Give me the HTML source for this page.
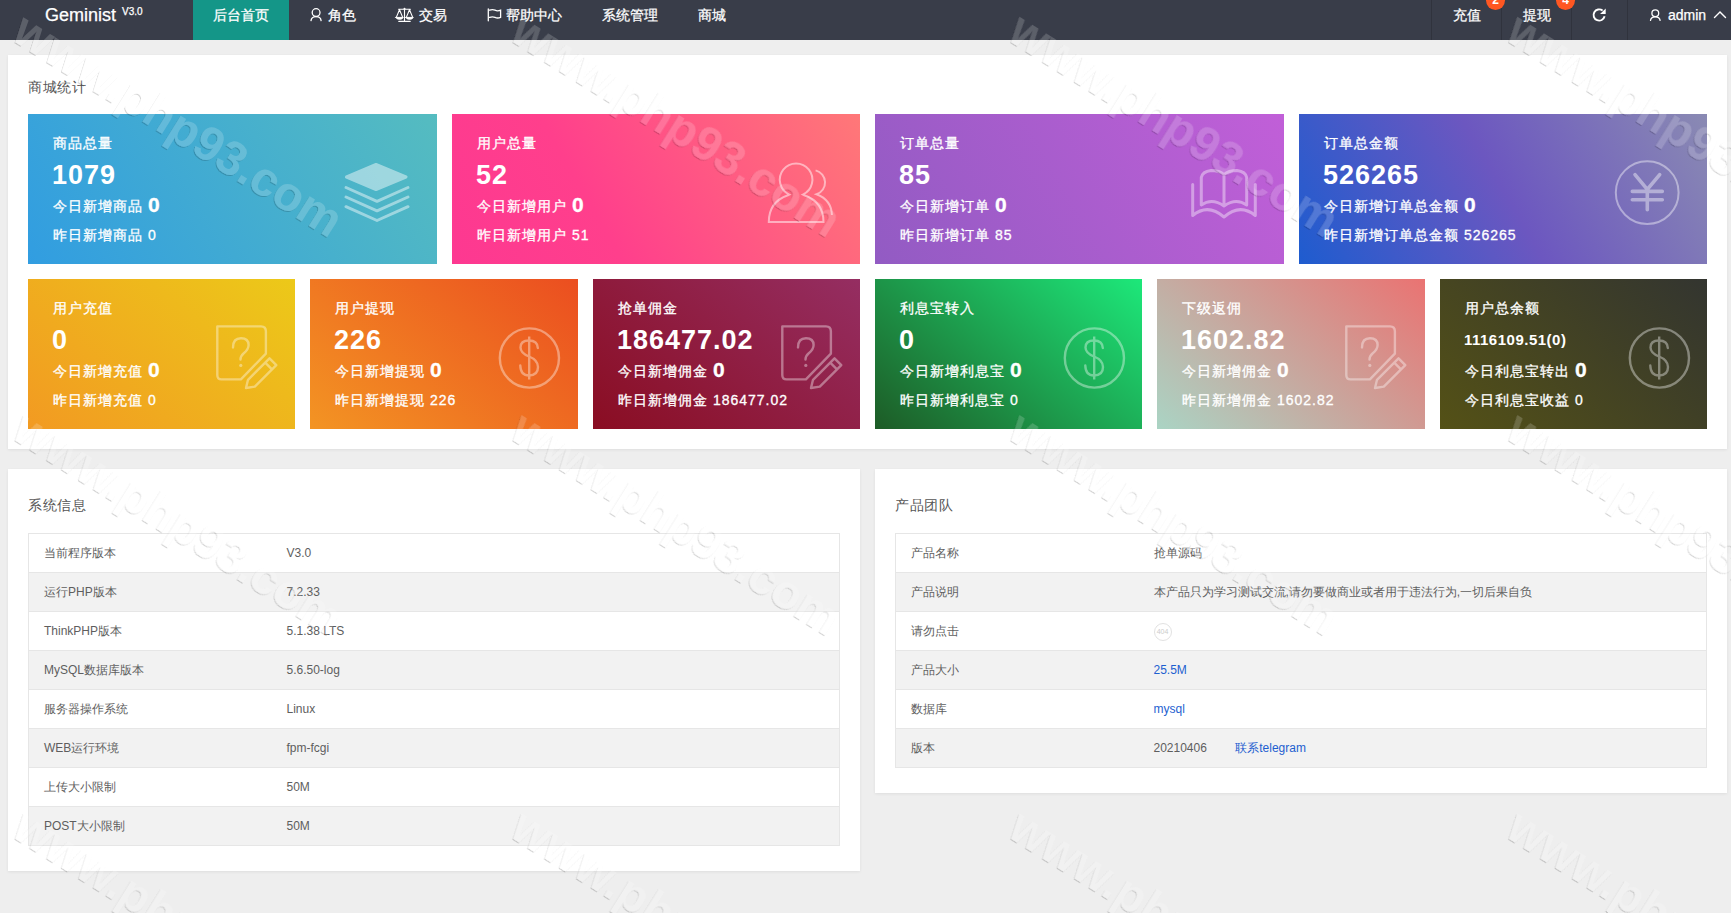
<!DOCTYPE html>
<html><head><meta charset="utf-8">
<style>
*{margin:0;padding:0;box-sizing:border-box}
html,body{width:1731px;height:913px;overflow:hidden}
body{background:#eeeeee;font-family:"Liberation Sans",sans-serif;position:relative;color:#666}
.abs{position:absolute}
#hd{left:0;top:0;width:1731px;height:40px;background:#393d49;color:#fff}
.nav{position:absolute;top:0;height:30px;line-height:30px;font-size:14px;color:#fff;white-space:nowrap;-webkit-text-stroke:.25px #fff}
.sep{position:absolute;top:0;width:1px;height:40px;background:#30333d}
.badge{position:absolute;top:-9px;width:19px;height:19px;border-radius:50%;background:#ff5722;color:#fff;font-size:12px;font-weight:bold;line-height:19px;text-align:center}
.panel{position:absolute;background:#fff;box-shadow:0 1px 3px rgba(0,0,0,.07)}
.ptitle{position:absolute;font-size:14px;color:#555;line-height:20px;letter-spacing:.5px}
.card{position:absolute;height:150px;color:#fff;overflow:hidden;letter-spacing:1px}
.card .t,.card .d1,.card .d2{-webkit-text-stroke:.3px #fff}
.card .t{position:absolute;left:25px;top:19px;font-size:14px;line-height:20px;letter-spacing:1px}
.card .n{position:absolute;left:24px;top:45px;font-size:27px;line-height:32px;font-weight:bold}
.card .d1{position:absolute;left:25px;top:79px;font-size:14px;line-height:22px;letter-spacing:1px}
.card .d1 b{font-size:21px;letter-spacing:0;position:relative;top:1px}
.card .d2{position:absolute;left:25px;top:111px;font-size:14px;line-height:20px;letter-spacing:1px}
.card svg{position:absolute}
table{position:absolute;border-collapse:collapse;font-size:12px;color:#5e5e5e}
td{height:39px;border:1px solid #e6e6e6;border-left:none;border-right:none;padding:0 0 0 15px;vertical-align:middle}
tr:nth-child(even) td{background:#f2f2f2}
.lnk{color:#1e5fd0}
</style></head><body>

<div id="hd" class="abs">
  <div class="nav" style="left:45px;font-size:18px;top:0px;line-height:30px">Geminist</div>
  <div class="nav" style="left:122px;font-size:10px;top:-3px;line-height:30px">V3.0</div>
  <div class="abs" style="left:193px;top:0;width:96px;height:40px;background:#149688"></div>
  <div class="nav" style="left:213px">后台首页</div>
  <div class="nav" style="left:328px">角色</div>
  <div class="nav" style="left:419px">交易</div>
  <div class="nav" style="left:506px">帮助中心</div>
  <div class="nav" style="left:602px">系统管理</div>
  <div class="nav" style="left:698px">商城</div>

  <div class="sep" style="left:1431px"></div>
  <div class="sep" style="left:1501px"></div>
  <div class="sep" style="left:1571px"></div>
  <div class="sep" style="left:1627px"></div>
  <div class="nav" style="left:1453px">充值</div>
  <div class="badge" style="left:1486px">2</div>
  <div class="nav" style="left:1523px">提现</div>
  <div class="badge" style="left:1556px">4</div>
  <div class="nav" style="left:1668px">admin</div>
</div>

<!-- top panel -->
<div class="panel" style="left:8px;top:55px;width:1719px;height:394px"></div>
<div class="ptitle" style="left:28px;top:77px">商城统计</div>

<div class="card" style="left:28px;top:114px;width:409px;background:linear-gradient(57deg,#319de1,#55bcc0)">
  <div class="t">商品总量</div><div class="n">1079</div>
  <div class="d1">今日新增商品 <b>0</b></div><div class="d2">昨日新增商品 0</div>
</div>
<div class="card" style="left:452px;top:114px;width:408px;background:linear-gradient(60deg,#fd3891,#ff3f8c 35%,#ff7878)">
  <div class="t">用户总量</div><div class="n">52</div>
  <div class="d1">今日新增用户 <b>0</b></div><div class="d2">昨日新增用户 51</div>
</div>
<div class="card" style="left:875px;top:114px;width:409px;background:linear-gradient(60deg,#925bc3,#c15fd8)">
  <div class="t">订单总量</div><div class="n">85</div>
  <div class="d1">今日新增订单 <b>0</b></div><div class="d2">昨日新增订单 85</div>
</div>
<div class="card" style="left:1299px;top:114px;width:408px;background:linear-gradient(60deg,#1e5ccf,#6c57c0 50%,#8a8ab3)">
  <div class="t">订单总金额</div><div class="n">526265</div>
  <div class="d1">今日新增订单总金额 <b>0</b></div><div class="d2">昨日新增订单总金额 526265</div>
</div>

<div class="card" style="left:28px;top:279px;width:267px;background:linear-gradient(40deg,#f29a22,#ecc919)">
  <div class="t">用户充值</div><div class="n">0</div>
  <div class="d1">今日新增充值 <b>0</b></div><div class="d2">昨日新增充值 0</div>
</div>
<div class="card" style="left:310px;top:279px;width:268px;background:linear-gradient(40deg,#f39423,#eb4e20)">
  <div class="t">用户提现</div><div class="n">226</div>
  <div class="d1">今日新增提现 <b>0</b></div><div class="d2">昨日新增提现 226</div>
</div>
<div class="card" style="left:593px;top:279px;width:267px;background:linear-gradient(40deg,#8a0d22,#952e62)">
  <div class="t">抢单佣金</div><div class="n">186477.02</div>
  <div class="d1">今日新增佣金 <b>0</b></div><div class="d2">昨日新增佣金 186477.02</div>
</div>
<div class="card" style="left:875px;top:279px;width:267px;background:linear-gradient(40deg,#1d5b26,#1de87a)">
  <div class="t">利息宝转入</div><div class="n">0</div>
  <div class="d1">今日新增利息宝 <b>0</b></div><div class="d2">昨日新增利息宝 0</div>
</div>
<div class="card" style="left:1157px;top:279px;width:268px;background:linear-gradient(40deg,#aad4c4,#ea7372)">
  <div class="t">下级返佣</div><div class="n">1602.82</div>
  <div class="d1">今日新增佣金 <b>0</b></div><div class="d2">昨日新增佣金 1602.82</div>
</div>
<div class="card" style="left:1440px;top:279px;width:267px;background:linear-gradient(40deg,#545116,#333530)">
  <div class="t">用户总余额</div><div class="n" style="font-size:15px;letter-spacing:.5px">1116109.51(0)</div>
  <div class="d1">今日利息宝转出 <b>0</b></div><div class="d2">今日利息宝收益 0</div>
</div>

<!-- bottom left panel -->
<div class="panel" style="left:8px;top:469px;width:852px;height:402px"></div>
<div class="ptitle" style="left:28px;top:495px">系统信息</div>
<table style="left:28px;top:533px;width:812px;border-left:1px solid #e6e6e6;border-right:1px solid #e6e6e6">
<colgroup><col style="width:243px"><col></colgroup>
<tr><td>当前程序版本</td><td>V3.0</td></tr>
<tr><td>运行PHP版本</td><td>7.2.33</td></tr>
<tr><td>ThinkPHP版本</td><td>5.1.38 LTS</td></tr>
<tr><td>MySQL数据库版本</td><td>5.6.50-log</td></tr>
<tr><td>服务器操作系统</td><td>Linux</td></tr>
<tr><td>WEB运行环境</td><td>fpm-fcgi</td></tr>
<tr><td>上传大小限制</td><td>50M</td></tr>
<tr><td>POST大小限制</td><td>50M</td></tr>
</table>

<!-- bottom right panel -->
<div class="panel" style="left:875px;top:469px;width:852px;height:324px"></div>
<div class="ptitle" style="left:895px;top:495px">产品团队</div>
<table style="left:895px;top:533px;width:812px;border-left:1px solid #e6e6e6;border-right:1px solid #e6e6e6">
<colgroup><col style="width:243px"><col></colgroup>
<tr><td>产品名称</td><td>抢单源码</td></tr>
<tr><td>产品说明</td><td>本产品只为学习测试交流,请勿要做商业或者用于违法行为,一切后果自负</td></tr>
<tr><td>请勿点击</td><td><span style="display:inline-block;width:18px;height:18px;border:1px solid #e2e2e2;border-radius:50%;font-size:7px;line-height:16px;text-align:center;color:#ccc;vertical-align:middle;position:relative;top:1px">404</span></td></tr>
<tr><td>产品大小</td><td class="lnk">25.5M</td></tr>
<tr><td>数据库</td><td class="lnk">mysql</td></tr>
<tr><td>版本</td><td>20210406 <span class="lnk" style="margin-left:25px">联系telegram</span></td></tr>
</table>


<svg class="abs" style="left:0;top:0;pointer-events:none" width="1731" height="913" viewBox="0 0 1731 913">
<defs>
 <g id="help" fill="none" stroke="#fff" opacity=".38" stroke-width="2.4" stroke-linejoin="round" stroke-linecap="round">
  <path d="M217.3 326.4 H261 Q265.9 326.4 265.9 331.5 V353.6 L240.9 379.4 H221.5 Q217.3 379.4 217.3 375 Z"/>
  <path d="M233 347.4 Q233 338.2 241 338.2 Q248.6 338.2 248.6 345 Q248.6 349.5 243.5 353.5 Q240.5 356 240.5 359.5"/>
  <circle cx="240.8" cy="365.4" r="1.6" fill="#fff" stroke="none"/>
  <path d="M246 388 L248 379.8 L269.5 358.3 L276.3 365.1 L254.8 386.6 Z M265.2 362.6 L272 369.4"/>
 </g>
 <g id="dollar" fill="none" stroke="#fff" opacity=".38" stroke-width="2.4" stroke-linecap="round">
  <circle cx="529.4" cy="358" r="29.6"/>
  <path d="M537.8 348 Q537.5 340.5 529 340.5 Q520.5 340.5 520.5 347.5 Q520.5 353 529 356.5 Q538 360 538 367 Q538 375.5 529 375.5 Q520.5 375.5 520.3 365.5"/>
  <path d="M529.2 336.5 V379.5" stroke-linecap="butt"/>
 </g>
</defs>
<!-- layers -->
<g fill="none" stroke="#fff" opacity=".45" stroke-width="3" stroke-linecap="round" stroke-linejoin="round">
 <path d="M376 164.5 L406 177 L376 189.5 L346.5 177 Z" fill="#fff"/>
 <path d="M346 187.5 L377 201.3 L408 187.5"/>
 <path d="M346 197 L377 210.8 L408 197"/>
 <path d="M346 206.7 L377 220.5 L408 206.7"/>
</g>
<!-- users -->
<g fill="none" stroke="rgba(255,255,255,.5)" stroke-width="2" stroke-linejoin="miter">
 <path d="M789.3 194.6 A16.3 16.3 0 1 1 802.9 194.6 L804.3 195.3 Q823.5 202 823.5 222 L768.8 222 Q768.8 202 787.9 195.3 Z"/>
 <path d="M815.6 170.4 A12.4 12.4 0 0 1 816.6 194.2 Q831.5 200 831.9 215"/>
</g>
<!-- book -->
<g fill="none" stroke="rgba(255,255,255,.4)" stroke-width="3" stroke-linecap="round" stroke-linejoin="round">
 <path d="M1201.3 205 V177.5 Q1202.5 171.5 1211 170.5 Q1219.5 170.5 1224 174.5 Q1228.5 170.5 1237 170.5 Q1245.5 171.5 1246.7 177.5 V205 Q1236 197.5 1224 206 Q1212 197.5 1201.3 205 Z M1224 174.5 V206"/>
 <path d="M1192.7 184.5 V215.5 Q1208 203 1224 217 Q1240 203 1255.3 215.5 V184.5"/>
</g>
<!-- yen -->
<g fill="none" stroke="rgba(255,255,255,.42)" stroke-linecap="round">
 <circle cx="1647.2" cy="192.6" r="31.4" stroke-width="2"/>
 <path d="M1635 174.7 L1647.3 189.5 L1659.7 174.7 M1632.3 191.4 H1662.3 M1632.3 199.8 H1662.3 M1647.3 189.5 V209.8" stroke-width="3.6"/>
</g>
<use href="#help"/>
<use href="#help" transform="translate(565,0)"/>
<use href="#help" transform="translate(1129,0)"/>
<use href="#dollar"/>
<use href="#dollar" transform="translate(565,0)"/>
<use href="#dollar" transform="translate(1130,0)"/>
<!-- header icons -->
<g fill="none" stroke="#fff" stroke-width="1.3" stroke-linecap="round">
 <circle cx="316.1" cy="12.6" r="3.9"/>
 <path d="M311 20.6 Q311.5 16.6 316.1 16.6 Q320.7 16.6 321.1 20.6"/>
 <circle cx="1655.3" cy="13.2" r="3.4"/>
 <path d="M1650.5 20.4 Q1651 16.8 1655.3 16.8 Q1659.6 16.8 1660.1 20.4"/>
 <path d="M1714.5 17.6 L1720 12 L1725.5 17.6" stroke-width="1.4"/>
 <path d="M488.3 9 V20.8 M489.6 10.2 Q492.5 9 495 10.2 Q497.5 11.4 500.6 10.2 V17.4 Q497.5 18.6 495 17.4 Q492.5 16.2 489.6 17.4"/>
 <path d="M398.6 9.2 H410.4 M404.5 9.2 V21.4 M398.8 21.4 H410.2 M399.5 9.8 L396.3 17.4 M399.5 9.8 L402.7 17.4 M409.5 9.8 L406.3 17.4 M409.5 9.8 L412.7 17.4" stroke-width="1.1"/>
 <path d="M395.8 17.4 H403.2 Q402.6 19.3 399.5 19.3 Q396.4 19.3 395.8 17.4 Z M405.8 17.4 H413.2 Q412.6 19.3 409.5 19.3 Q406.4 19.3 405.8 17.4 Z" stroke-width="1" fill="#fff"/>
 <circle cx="404.5" cy="8.7" r="1" fill="#fff" stroke="none"/>
 <path d="M1602.6 10.6 A5.6 5.6 0 1 0 1604.6 16.3" stroke-width="1.9" stroke-linecap="butt"/>
</g>
<path d="M1605.7 8.5 V14.1 H1600.1 Z" fill="#fff"/>
</svg>

<svg class="abs" style="left:0;top:0;pointer-events:none" width="1731" height="913">
<defs><filter id="emb" x="-5%" y="-5%" width="110%" height="110%">
<feOffset in="SourceAlpha" dx="-1" dy="1" result="o"/>
<feGaussianBlur in="o" stdDeviation=".5" result="ob"/>
<feComposite in="ob" in2="SourceAlpha" operator="out" result="s"/>
<feColorMatrix in="s" type="matrix" values="0 0 0 0 0  0 0 0 0 0  0 0 0 0 0  0 0 0 .16 0" result="sh"/>
<feColorMatrix in="SourceGraphic" type="matrix" values="1 0 0 0 0  0 1 0 0 0  0 0 1 0 0  0 0 0 .18 0" result="g"/>
<feMerge><feMergeNode in="sh"/><feMergeNode in="g"/></feMerge>
</filter></defs>
<g filter="url(#emb)" fill="#fff" font-family="Liberation Sans" font-size="48" font-weight="bold">
<text x="0" y="0" transform="translate(10.04 38.84) rotate(32)">www.php93.com</text>
<text x="0" y="0" transform="translate(507.94 38.84) rotate(32)">www.php93.com</text>
<text x="0" y="0" transform="translate(1005.84 38.84) rotate(32)">www.php93.com</text>
<text x="0" y="0" transform="translate(1503.74 38.84) rotate(32)">www.php93.com</text>
<text x="0" y="0" transform="translate(10.04 437.14) rotate(32)">www.php93.com</text>
<text x="0" y="0" transform="translate(507.94 437.14) rotate(32)">www.php93.com</text>
<text x="0" y="0" transform="translate(1005.84 437.14) rotate(32)">www.php93.com</text>
<text x="0" y="0" transform="translate(1503.74 437.14) rotate(32)">www.php93.com</text>
<text x="0" y="0" transform="translate(10.04 835.44) rotate(32)">www.php93.com</text>
<text x="0" y="0" transform="translate(507.94 835.44) rotate(32)">www.php93.com</text>
<text x="0" y="0" transform="translate(1005.84 835.44) rotate(32)">www.php93.com</text>
<text x="0" y="0" transform="translate(1503.74 835.44) rotate(32)">www.php93.com</text>
</g></svg>
</body></html>
